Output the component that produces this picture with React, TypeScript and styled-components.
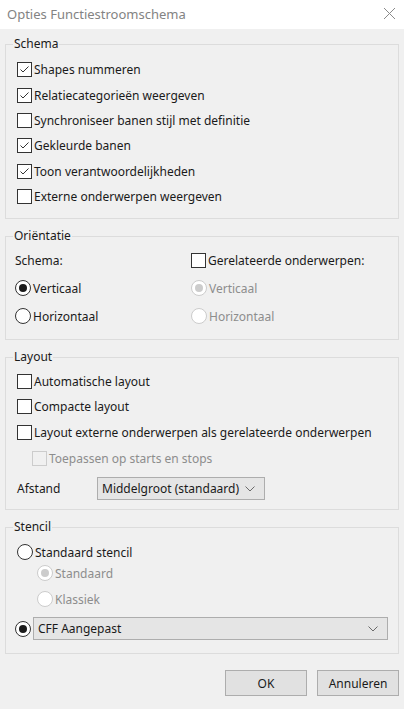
import React from 'react'
import styled, { createGlobalStyle } from 'styled-components'

const GlobalStyle = createGlobalStyle`
    html, body {
        margin: 0;
        padding: 0;
        background: #f0f0f0;
    }
    body {
        font-family: "Noto Sans", "Open Sans", sans-serif;
        font-size: 12px;
        color: #1a1a1a;
    }
`

type CheckProps = {
    label: string,
    checked?: boolean,
    disabled?: boolean,
}

function CheckBox({ label, checked, disabled }: CheckProps) {
    return (
        <Choice disabled={disabled}>
            <Box disabled={disabled}>
                {checked && (
                    <svg width="13" height="13" viewBox="0 0 13 13">
                        <polyline points="2.5,6.5 5,9 10.5,3.5" fill="none" stroke="#333" strokeWidth="1" />
                    </svg>
                )}
            </Box>
            {label}
        </Choice>
    )
}

function Radio({ label, checked, disabled }: CheckProps) {
    return (
        <Choice disabled={disabled}>
            <Circle disabled={disabled}>
                {checked && <Dot disabled={disabled} />}
            </Circle>
            {label}
        </Choice>
    )
}

function Chevron() {
    return (
        <svg width="10" height="6" viewBox="0 0 10 6">
            <polyline points="0.5,0.5 5,5 9.5,0.5" fill="none" stroke="#6a6a6a" strokeWidth="1" />
        </svg>
    )
}

function App() {
    return (
        <Dialog>
            <GlobalStyle />
            <TitleBar>
                <Title>Opties Functiestroomschema</Title>
                <svg width="13" height="13" viewBox="0 0 13 13">
                    <path d="M1 1 L12 12 M12 1 L1 12" stroke="#8a8a8a" strokeWidth="1" />
                </svg>
            </TitleBar>

            <Body>
                <Group>
                    <Legend>Schema</Legend>
                    <Stack pt={5} pb={9}>
                        <Row h={25.4}><CheckBox label="Shapes nummeren" checked /></Row>
                        <Row h={25.4}><CheckBox label="Relatiecategorieën weergeven" checked /></Row>
                        <Row h={25.4}><CheckBox label="Synchroniseer banen stijl met definitie" /></Row>
                        <Row h={25.4}><CheckBox label="Gekleurde banen" checked /></Row>
                        <Row h={25.4}><CheckBox label="Toon verantwoordelijkheden" checked /></Row>
                        <Row h={25.4}><CheckBox label="Externe onderwerpen weergeven" /></Row>
                    </Stack>
                </Group>

                <Group>
                    <Legend>Oriëntatie</Legend>
                    <OrientGrid>
                        <Caption>Schema:</Caption>
                        <CheckBox label="Gerelateerde onderwerpen:" />
                        <Radio label="Verticaal" checked />
                        <Radio label="Verticaal" checked disabled />
                        <Radio label="Horizontaal" />
                        <Radio label="Horizontaal" disabled />
                    </OrientGrid>
                </Group>

                <Group>
                    <Legend>Layout</Legend>
                    <Stack pt={3} pb={9}>
                        <Row h={25.7}><CheckBox label="Automatische layout" /></Row>
                        <Row h={25.7}><CheckBox label="Compacte layout" /></Row>
                        <Row h={25.7}><CheckBox label="Layout externe onderwerpen als gerelateerde onderwerpen" /></Row>
                        <Row h={25.7} indent={15}><CheckBox label="Toepassen op starts en stops" disabled /></Row>
                        <SpacingRow>
                            <Caption>Afstand</Caption>
                            <Combo width={168}>
                                <span>Middelgroot (standaard)</span>
                                <Chevron />
                            </Combo>
                        </SpacingRow>
                    </Stack>
                </Group>

                <Group>
                    <Legend>Stencil</Legend>
                    <Stack pt={5} pb={13}>
                        <Row h={24}><Radio label="Standaard stencil" /></Row>
                        <Row h={18} indent={20}><Radio label="Standaard" checked disabled /></Row>
                        <Row h={34} indent={20}><Radio label="Klassiek" disabled /></Row>
                        <ComboRow>
                            <Radio label="" checked />
                            <Combo>
                                <span>CFF Aangepast</span>
                                <Chevron />
                            </Combo>
                        </ComboRow>
                    </Stack>
                </Group>

                <Buttons>
                    <Button>OK</Button>
                    <Button>Annuleren</Button>
                </Buttons>
            </Body>
        </Dialog>
    )
}

const Dialog = styled.div`
    width: 404px;
    height: 709px;
    display: flex;
    flex-direction: column;
    background: #f0f0f0;
    overflow: hidden;
`

const TitleBar = styled.div`
    height: 29px;
    background: #fff;
    display: flex;
    align-items: center;
    justify-content: space-between;
    padding: 0 7px 0 7px;
    svg {
        margin-right: 1px;
        margin-top: -2px;
    }
`

const Title = styled.span`
    font-size: 13px;
    color: #838383;
    margin-top: -2px;
`

const Body = styled.div`
    padding: 7px 5px 0;
    display: flex;
    flex-direction: column;
    gap: 9px;
`

const Group = styled.fieldset`
    margin: 0;
    padding: 0;
    min-width: 0;
    border: 1px solid #dcdcdc;
`

const Legend = styled.legend`
    margin-left: 7px;
    padding: 0 1px;
    line-height: 16px;
    font-size: 12px;
`

const Stack = styled.div<{ pt: number, pb: number }>`
    display: flex;
    flex-direction: column;
    padding: ${p => p.pt}px 8px ${p => p.pb}px 11px;
`

const Row = styled.div<{ h: number, indent?: number }>`
    height: ${p => p.h}px;
    display: flex;
    align-items: center;
    padding-left: ${p => p.indent || 0}px;
`

const Choice = styled.label<{ disabled?: boolean }>`
    display: flex;
    align-items: center;
    gap: 2px;
    white-space: nowrap;
    color: ${p => p.disabled ? '#8d8d8d' : '#1a1a1a'};
`

const Box = styled.span<{ disabled?: boolean }>`
    width: 13px;
    height: 13px;
    flex: none;
    display: flex;
    border: 1px solid ${p => p.disabled ? '#cccccc' : '#333333'};
    background: ${p => p.disabled ? '#f0f0f0' : '#ffffff'};
`

const Circle = styled.span<{ disabled?: boolean }>`
    width: 14px;
    height: 14px;
    flex: none;
    border-radius: 50%;
    display: flex;
    align-items: center;
    justify-content: center;
    border: 1px solid ${p => p.disabled ? '#cccccc' : '#333333'};
    background: #ffffff;
`

const Dot = styled.span<{ disabled?: boolean }>`
    width: 8px;
    height: 8px;
    border-radius: 50%;
    background: ${p => p.disabled ? '#cccccc' : '#1a1a1a'};
`

const OrientGrid = styled.div`
    display: grid;
    grid-template-columns: 176px 1fr;
    grid-template-rows: 28px 28px 28px;
    align-items: center;
    padding: 2px 8px 9px 9px;
`

const Caption = styled.span`
    white-space: nowrap;
`

const SpacingRow = styled.div`
    display: grid;
    grid-template-columns: 80px auto;
    justify-content: start;
    align-items: center;
    margin-top: 6px;
`

const Combo = styled.div<{ width?: number }>`
    height: 23px;
    box-sizing: border-box;
    ${p => p.width ? `width: ${p.width}px;` : 'flex: 1;'}
    display: flex;
    align-items: center;
    justify-content: space-between;
    padding: 0 9px 0 4px;
    background: #e5e5e5;
    border: 1px solid #adadad;
    color: #1a1a1a;
`

const ComboRow = styled.div`
    display: flex;
    align-items: center;
    margin-top: 1px;
    margin-right: 2px;
    margin-left: -2px;
    > label {
        gap: 0;
        margin-right: 2px;
    }
`

const Buttons = styled.div`
    display: flex;
    justify-content: flex-end;
    gap: 10px;
    margin-top: 7px;
`

const Button = styled.button`
    width: 82px;
    height: 26px;
    padding: 0;
    font-family: inherit;
    font-size: 12px;
    color: #1a1a1a;
    background: #e1e1e1;
    border: 1px solid #adadad;
`

export default App
